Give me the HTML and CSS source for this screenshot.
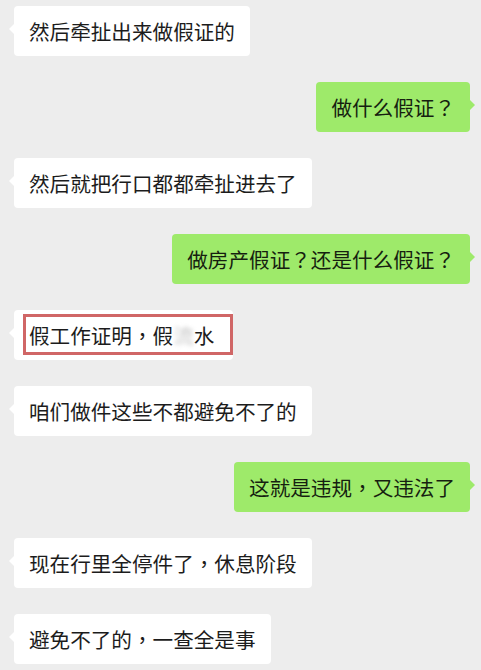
FILE: index.html
```html
<!DOCTYPE html>
<html lang="zh-CN">
<head>
  <meta charset="UTF-8">
  <meta name="viewport" content="width=device-width, initial-scale=1.0">
  <title>聊天记录</title>
  <link rel="stylesheet" href="styles.css">
</head>
<body>

  <!-- 聊天记录 -->
  <main class="chat">
    <div class="msg in"><p class="bubble">然后牵扯出来做假证的</p></div>
    <div class="msg out"><p class="bubble">做什么假证<span class="p" lang="zh-TW">？</span></p></div>
    <div class="msg in"><p class="bubble">然后就把行口都都牵扯进去了</p></div>
    <div class="msg out"><p class="bubble">做房产假证<span class="p" lang="zh-TW">？</span>还是什么假证<span class="p" lang="zh-TW">？</span></p></div>
    <div class="msg in">
      <p class="bubble marked">假工作证明<span class="p" lang="zh-TW">，</span>假<span class="masked">流</span>水</p>
    </div>
    <div class="msg in"><p class="bubble">咱们做件这些不都避免不了的</p></div>
    <div class="msg out"><p class="bubble">这就是违规<span class="p" lang="zh-TW">，</span>又违法了</p></div>
    <div class="msg in"><p class="bubble">现在行里全停件了<span class="p" lang="zh-TW">，</span>休息阶段</p></div>
    <div class="msg in"><p class="bubble">避免不了的<span class="p" lang="zh-TW">，</span>一查全是事</p></div>
  </main>

</body>
</html>
```

FILE: styles.css
```css
/* 기본 색상 */
html {
  --bg: #ededed;
  --white: #ffffff;
  --green: #9eea6a;
  --text: #1c1c1c;
  --mark: #d06666;
}

body {
  margin: 0;
  background: var(--bg);
  font-family: "Noto Sans CJK SC", "Noto Sans", sans-serif;
  color: var(--text);
}

.chat {
  display: flex;
  flex-direction: column;
  gap: 26px;
  padding: 6px 11px 0 14px;
}

.msg {
  display: flex;
}

.msg.out {
  justify-content: flex-end;
}

.bubble {
  position: relative;
  margin: 0;
  padding: 11px 15px;
  font-size: 20.6px;
  line-height: 28px;
  border-radius: 4px;
  white-space: nowrap;
}

/* 전각 문장부호는 가운데 정렬 */
.p {
  font-family: "Noto Sans CJK TC", "Noto Sans CJK SC", sans-serif;
}

/* 말풍선 꼬리 */
.bubble::before {
  content: "";
  position: absolute;
  top: 17px;
  border: 6px solid transparent;
}

.in .bubble {
  background: var(--white);
}

.in .bubble::before {
  left: -11px;
  border-right-color: var(--white);
}

.out .bubble {
  background: var(--green);
  color: #161f10;
}

.out .bubble::before {
  right: -11px;
  border-left-color: var(--green);
}

/* 빨간 표시 상자 */
.marked {
  padding-right: 19px;
}

.marked::after {
  content: "";
  position: absolute;
  left: 9px;
  right: 0;
  top: 4px;
  bottom: 5px;
  border: 3px solid var(--mark);
  pointer-events: none;
}

/* 모자이크 처리 */
.masked {
  position: relative;
  color: #c8c8c8;
  filter: blur(2px);
}
```
